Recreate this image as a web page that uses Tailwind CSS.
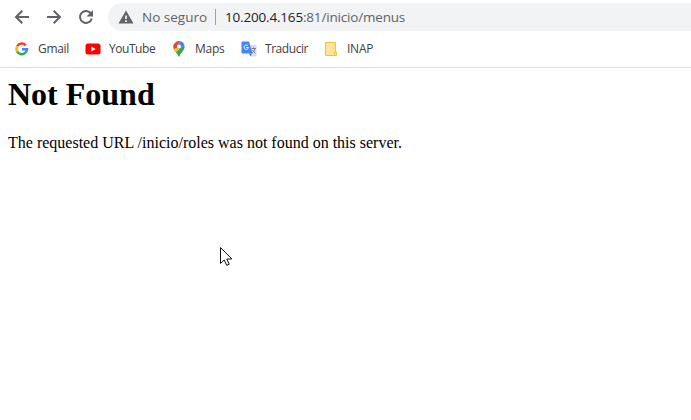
<!DOCTYPE html>
<html lang="es">
<head>
<meta charset="utf-8">
<title>Not Found</title>
<script src="https://cdn.jsdelivr.net/npm/@tailwindcss/browser@4"></script>
</head>
<body class="h-screen overflow-hidden bg-white">
<header class="h-[68px] border-b border-[#dadce0] font-['Open_Sans','Noto_Sans',sans-serif]">
  <div class="flex h-[34px] items-center pl-[14px] text-[#5f6368]">
    <svg class="size-4 shrink-0" viewBox="0 0 16 16" fill="none" stroke="currentColor" stroke-width="2"><path d="M15 8H2.5M8.3 1.7L2 8l6.300 6.300"/></svg>
    <svg class="ml-4 size-4 shrink-0" viewBox="0 0 16 16" fill="none" stroke="currentColor" stroke-width="2"><path d="M1 8h12.500M7.700 1.700L14 8l-6.300 6.300"/></svg>
    <svg class="ml-4 size-4 shrink-0" viewBox="0 0 16 16"><path d="M13 4.600A6 6 0 1 0 13.800 9.500" fill="none" stroke="currentColor" stroke-width="2"/><path d="M15 1v6.500H8.500z" fill="currentColor"/></svg>
    <div class="ml-[14px] flex h-7 flex-1 items-center rounded-l-full bg-[#f1f3f4] pl-[10px] text-[13.5px] whitespace-nowrap">
      <svg class="h-[14px] w-4 shrink-0" viewBox="0 0 16 14"><path d="M8 .5L15.500 13.500H.5z" fill="currentColor"/><path d="M7.200 5.500h1.600v3.500H7.200zM7.200 10.200h1.600v1.700H7.200z" fill="#fff"/></svg>
      <span class="ml-2 w-[73px]">No seguro</span>
      <span class="h-4 w-px bg-[#9aa0a6]"></span>
      <span class="ml-[9px] tracking-[-0.18px]"><span class="text-[#202124]">10.200.4.165</span>:81/inicio/menus</span>
    </div>
  </div>
  <nav class="flex h-[30px] items-center pl-[14px] text-xs tracking-[-0.45px] whitespace-nowrap text-[#3c4043]">
    <a class="flex w-[71px] items-center gap-2">
      <svg class="size-4 shrink-0" viewBox="0 0 16 16" fill="none" stroke-width="2.500"><path d="M3.300 5.300A5 5 0 0 1 11.700 4.500" stroke="#ea4335"/><path d="M3.300 5.300a5 5 0 0 0 0 5.400" stroke="#fbbc05"/><path d="M3.300 10.700A5 5 0 0 0 11.300 11.700" stroke="#34a853"/><path d="M11.300 11.700A5 5 0 0 0 13 8.200H8" stroke="#4285f4"/></svg>
      <span class="tracking-[-0.3px]">Gmail</span>
    </a>
    <a class="flex w-[86px] items-center gap-2">
      <svg class="size-4 shrink-0" viewBox="0 0 16 16"><rect x=".5" y="2.500" width="15" height="11" rx="2.500" fill="#f00"/><path d="M6.400 5.500v5L10.600 8z" fill="#fff"/></svg>
      <span>YouTube</span>
    </a>
    <a class="flex w-[70px] items-center gap-2">
      <svg class="size-4 shrink-0" viewBox="0 0 16 16">
        <path d="M3.400 9.300C4.500 11.500 7 12.400 8 16c1-3.700 5.500-6.400 5.500-10.500z" fill="#34a853"/>
        <path d="M3 2.900A5.500 5.500 0 0 0 3.500 9.400L8 5.500z" fill="#fbbc04"/>
        <path d="M3.500 9.400L11.900 1.600 13.400 4.500 5.500 12z" fill="#fbbc04"/>
        <path d="M5 11.500L13.300 3.900c1.200 5-4 7-5.300 12.100-.6-2.300-1.800-3-3-4.500z" fill="#34a853"/>
        <path d="M8 5.500L3.800 2.100A5.500 5.500 0 0 0 3 8z" fill="#ea4335"/>
        <path d="M3.800 2.100A5.500 5.500 0 0 1 9.700.3L5.600 5z" fill="#ea4335"/>
        <path d="M9.700.3A5.500 5.500 0 0 1 13.300 4L8.300 8.500 5.600 5z" fill="#4285f4"/>
        <circle cx="8" cy="5.600" r="2" fill="#fff"/>
      </svg>
      <span class="tracking-[-0.25px]">Maps</span>
    </a>
    <a class="flex w-[82px] items-center gap-2">
      <svg class="size-4 shrink-0" viewBox="0 0 16 16"><path d="M6 4h8.500q1 0 1 1v9.500q0 1-1 1H9z" fill="#dadce0"/><path d="M8.500 12.500H11L9 15.500z" fill="#3367d6"/><path d="M1.500.5H8l3.500 12h-10q-1 0-1-1v-10q0-1 1-1z" fill="#4285f4"/><path d="M7 4.800A2.200 2.200 0 1 0 7.500 6.500H5.300" fill="none" stroke="#fff"/><path d="M10.500 7.500H15M12.500 6.500v1M14 7.500q-.5 2.500-3 4.500M11.500 9l2.800 3.300" fill="none" stroke="#6f7780" stroke-width=".9"/></svg>
      <span>Traducir</span>
    </a>
    <a class="flex items-center gap-2">
      <svg class="size-4 shrink-0" viewBox="0 0 16 16"><path d="M2.500 1.500h10v9.500h1v3.500h-11z" fill="#ffe593" stroke="#e8c547"/><path d="M11.500 14v-3h1" fill="none" stroke="#e8c547"/></svg>
      <span class="tracking-[-0.25px]">INAP</span>
    </a>
  </nav>
</header>
<main class="px-2 pt-2 font-['Liberation_Serif',serif] text-black">
  <h1 class="text-[32px] leading-9 font-bold">Not Found</h1>
  <p class="mt-[22px] text-base leading-[18px]">The requested URL /inicio/roles was not found on this server.</p>
</main>
<svg class="absolute top-[246px] left-[220px] h-[21px] w-[13px]" viewBox="0 0 13 21"><path d="M.5 1.500v16l3.700-3.500 2.500 5.300 2.500-1.100L6.800 13h5.100z" fill="#fff" stroke="#101020"/></svg>
</body>
</html>
